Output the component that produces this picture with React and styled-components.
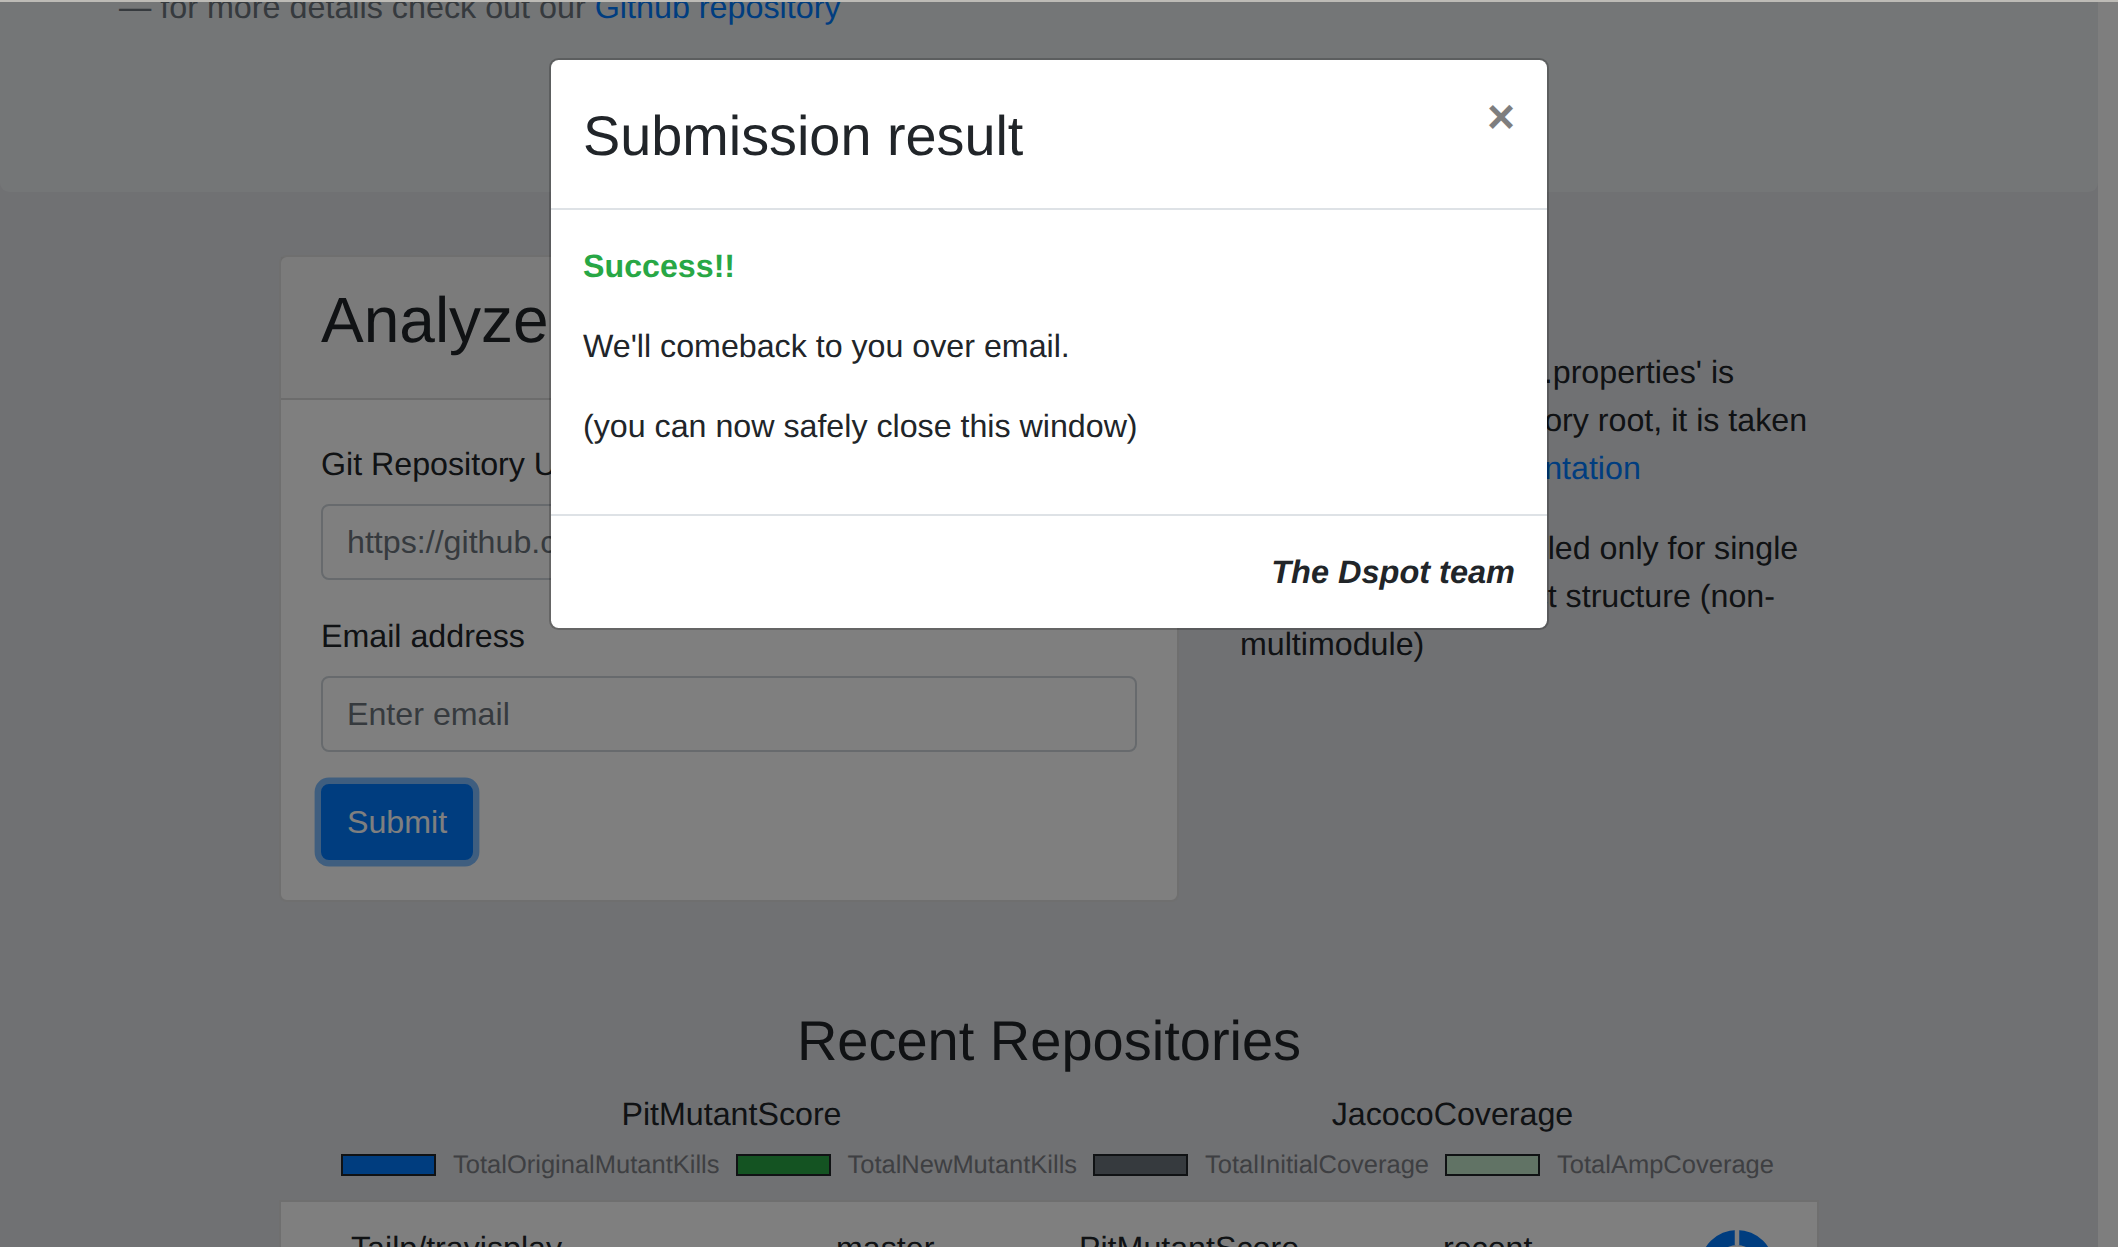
import styled, { createGlobalStyle } from "styled-components";

const GlobalStyle = createGlobalStyle`
  html, body {
    margin: 0;
    padding: 0;
    background: #e0e2e6;
  }
  * {
    box-sizing: border-box;
  }
`;

const Screen = styled.div`
  position: relative;
  width: 2118px;
  height: 1247px;
  overflow: hidden;
  background: #e0e2e6;
  color: #212529;
  font-family: "Liberation Sans", Arial, sans-serif;
  font-size: 32.2px;
  line-height: 48px;
  text-rendering: geometricPrecision;
`;

const TopStrip = styled.div`
  position: relative;
  z-index: 3;
  height: 2px;
  background: #bdbbb6;
`;

const PageBody = styled.div`
  display: flex;
  height: 1245px;
`;

const Main = styled.main`
  width: 2098px;
  flex: none;
`;

const Scrollbar = styled.div`
  flex: 1;
  background: #fdfdfd;
`;

const Jumbotron = styled.header`
  display: flex;
  align-items: flex-end;
  height: 190px;
  overflow: hidden;
  padding: 0 0 161px 119px;
  background: #e9ecef;
  border-radius: 0 0 9.6px 9.6px;
  margin-bottom: 63px;
`;

const QuoteFooter = styled.footer`
  font-size: 32.3px;
  color: #6c757d;
  white-space: nowrap;
`;

const Link = styled.a`
  color: #007bff;
  text-decoration: none;
`;

const Content = styled.div`
  width: 1540px;
  margin: 0 auto;
`;

const FormRow = styled.section`
  display: grid;
  grid-template-columns: 900px 580px;
  column-gap: 61px;
  margin-bottom: 105px;
`;

const Card = styled.div`
  background: #fff;
  border: 2px solid rgba(0, 0, 0, 0.125);
  border-radius: 8px;
`;

const CardHeader = styled.div`
  padding: 25px 40px 39px;
  background: rgba(0, 0, 0, 0.03);
  border-bottom: 2px solid rgba(0, 0, 0, 0.125);
`;

const Heading = styled.h2`
  margin: 0;
  font-size: ${(p) => p.$size || "64px"};
  font-weight: 400;
  line-height: 1.2;
  text-align: ${(p) => p.$align || "left"};
`;

const CardBody = styled.form`
  padding: 40px;
`;

const FormGroup = styled.div`
  margin-bottom: 32px;
`;

const Label = styled.label`
  display: block;
  margin-bottom: 16px;
`;

const Input = styled.input`
  display: block;
  width: 100%;
  height: 76px;
  padding: 13px 24px 11px;
  font: inherit;
  color: #495057;
  background: #fff;
  border: 2px solid #ced4da;
  border-radius: 8px;
  &::placeholder {
    color: #6c757d;
    opacity: 1;
  }
`;

const SubmitButton = styled.button`
  height: 76px;
  padding: 0 24px;
  font: inherit;
  color: #fff;
  background: #007bff;
  border: 2px solid #007bff;
  border-radius: 8px;
  box-shadow: 0 0 0 6.4px rgba(0, 123, 255, 0.5);
`;

const Notes = styled.aside`
  padding-top: 2px;
`;

const NotesTitle = styled.h3`
  margin: 0 0 24px;
  font-size: 56px;
  font-weight: 400;
  line-height: 1.2;
`;

const Note = styled.p`
  margin: 0 0 32px;
  white-space: nowrap;
`;

const ChartTitles = styled.div`
  display: grid;
  grid-template-columns: 721px 721px;
  justify-content: center;
  padding-left: 86px;
  margin-top: 16px;
  text-align: center;
`;

const Legend = styled.div`
  display: flex;
  justify-content: center;
  align-items: center;
  gap: 16px;
  height: 22px;
  margin: 16px 0 24px;
  padding-left: 17px;
`;

const LegendItem = styled.div`
  display: flex;
  align-items: center;
  gap: 17px;
  font-size: 25.5px;
  line-height: 22px;
  color: #7c7e84;
  white-space: nowrap;
`;

const Swatch = styled.span`
  width: 95px;
  height: 22px;
  background: ${(p) => p.$color};
  border: 2px solid #212529;
`;

const RepoList = styled.div`
  background: #fff;
  border: 2px solid rgba(0, 0, 0, 0.125);
`;

const RepoRow = styled.div`
  display: grid;
  grid-template-columns: 485px 243px 364px 1fr;
  padding: 22px 0 0 70px;
  height: 120px;
`;

const DonutCell = styled.div`
  display: flex;
  justify-content: space-between;
  padding-right: 42px;
`;

const DonutChart = styled.svg`
  margin-top: 5px;
`;

const Backdrop = styled.div`
  position: absolute;
  inset: 0;
  z-index: 1;
  background: rgba(0, 0, 0, 0.5);
`;

const ModalLayer = styled.div`
  position: absolute;
  inset: 0 20px 0 0;
  z-index: 2;
  display: flex;
  justify-content: center;
  align-items: flex-start;
  padding-top: 58px;
`;

const Modal = styled.div`
  width: 1000px;
  background: #fff;
  border: 2px solid rgba(0, 0, 0, 0.2);
  background-clip: padding-box;
  border-radius: 9.6px;
`;

const ModalHeader = styled.div`
  display: flex;
  align-items: flex-start;
  justify-content: space-between;
  padding: 32px;
  border-bottom: 2px solid #dee2e6;
`;

const ModalTitle = styled.h3`
  margin: 10px 0 7px;
  font-size: 55.8px;
  font-weight: 400;
  line-height: 67px;
`;

const CloseButton = styled.button`
  margin: -31px -32px -33px auto;
  padding: 32px;
  font-family: inherit;
  font-size: 48px;
  font-weight: 700;
  line-height: 1;
  color: #000;
  opacity: 0.5;
  background: transparent;
  border: 0;
`;

const ModalBody = styled.div`
  padding: 32px;
`;

const ModalText = styled.p`
  margin: 0 0 32px;
`;

const SuccessText = styled(ModalText)`
  color: #28a745;
  font-weight: 700;
`;

const ModalFooter = styled.div`
  padding: 32px;
  border-top: 2px solid #dee2e6;
  text-align: right;
  font-size: 32.5px;
  font-weight: 700;
  font-style: italic;
`;

const legendItems = [
  { label: "TotalOriginalMutantKills", color: "#007bff" },
  { label: "TotalNewMutantKills", color: "#28a745" },
  { label: "TotalInitialCoverage", color: "#6c757d" },
  { label: "TotalAmpCoverage", color: "#c3e6cb" },
];

function Donut() {
  return (
    <DonutChart width="76" height="76" viewBox="0 0 76 76">
      <circle cx="38" cy="38" r="37" fill="#007bff" />
      <circle cx="38" cy="38" r="22" fill="#fff" />
      <line x1="38" y1="0" x2="38" y2="16" stroke="#fff" strokeWidth="4.5" />
    </DonutChart>
  );
}

export default function App() {
  return (
    <Screen>
      <GlobalStyle />
      <TopStrip />
      <PageBody>
        <Main>
          <Jumbotron>
            <QuoteFooter>
              — for more details check out our <Link href="#">Github repository</Link>
            </QuoteFooter>
          </Jumbotron>
          <Content>
            <FormRow>
              <Card>
                <CardHeader>
                  <Heading>Analyze a repository</Heading>
                </CardHeader>
                <CardBody>
                  <FormGroup>
                    <Label>Git Repository URL</Label>
                    <Input placeholder="https://github.com/STAMP-project/dspot.git" />
                  </FormGroup>
                  <FormGroup>
                    <Label>Email address</Label>
                    <Input placeholder="Enter email" />
                  </FormGroup>
                  <SubmitButton type="button">Submit</SubmitButton>
                </CardBody>
              </Card>
              <Notes>
                <NotesTitle>Notes</NotesTitle>
                <Note>
                  Your config file 'dspot.properties' is
                  <br />
                  missing at the repository root, it is taken
                  <br />
                  shown in the <Link href="#">documentation</Link>
                </Note>
                <Note>
                  Dspot service is enabled only for single
                  <br />
                  maven module project structure (non-
                  <br />
                  multimodule)
                </Note>
              </Notes>
            </FormRow>
            <Heading $align="center" $size="56px">Recent Repositories</Heading>
            <ChartTitles>
              <div>PitMutantScore</div>
              <div>JacocoCoverage</div>
            </ChartTitles>
            <Legend>
              {legendItems.map((item) => (
                <LegendItem key={item.label}>
                  <Swatch $color={item.color} />
                  {item.label}
                </LegendItem>
              ))}
            </Legend>
            <RepoList>
              <RepoRow>
                <div>Tailp/travisplay</div>
                <div>master</div>
                <div>PitMutantScore</div>
                <DonutCell>
                  <span>recent</span>
                  <Donut />
                </DonutCell>
              </RepoRow>
            </RepoList>
          </Content>
        </Main>
        <Scrollbar />
      </PageBody>
      <Backdrop />
      <ModalLayer>
        <Modal>
          <ModalHeader>
            <ModalTitle>Submission result</ModalTitle>
            <CloseButton type="button">×</CloseButton>
          </ModalHeader>
          <ModalBody>
            <SuccessText>Success!!</SuccessText>
            <ModalText>We'll comeback to you over email.</ModalText>
            <ModalText>(you can now safely close this window)</ModalText>
          </ModalBody>
          <ModalFooter>The Dspot team</ModalFooter>
        </Modal>
      </ModalLayer>
    </Screen>
  );
}
